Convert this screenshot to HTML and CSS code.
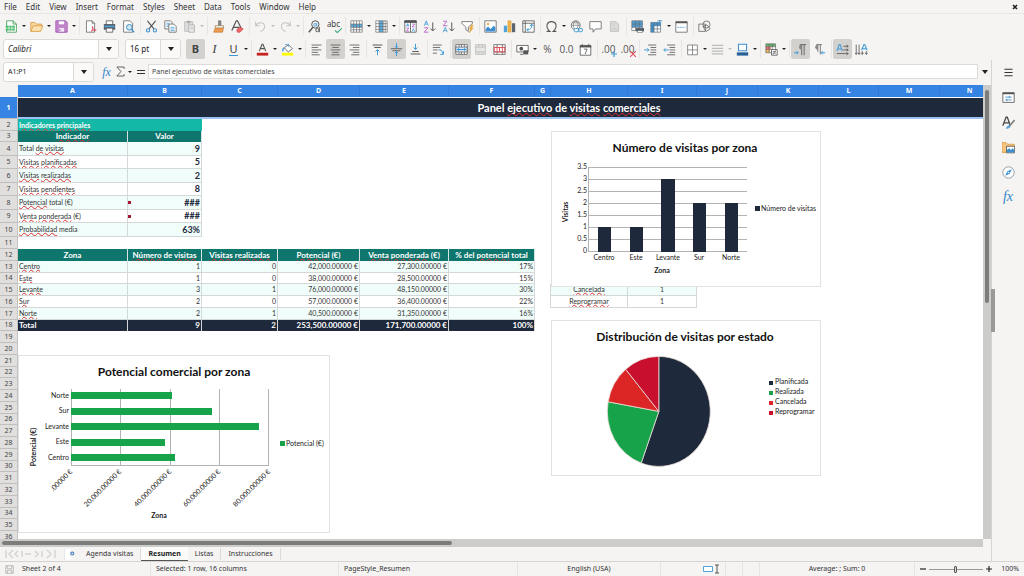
FILE: index.html
```html
<!DOCTYPE html>
<html lang="es">
<head>
<meta charset="utf-8">
<title>Panel ejecutivo de visitas comerciales</title>
<link rel="stylesheet" href="styles.css">
</head>
<body>
<div class="app">
  <nav class="menubar">
    <button>File</button><button>Edit</button><button>View</button><button>Insert</button><button>Format</button><button>Styles</button><button>Sheet</button><button>Data</button><button>Tools</button><button>Window</button><button>Help</button>
    <button class="close" aria-label="Close">
      <svg viewBox="0 0 6 6" width="6" height="6"><path d="M1 1l4 4M5 1l-4 4" stroke="#222" stroke-width="1.6"/></svg>
    </button>
  </nav>

  <div class="toolbar" role="toolbar" aria-label="Standard">
    <button class="tool" aria-label="New"><svg viewBox="0 0 16 16"><path d="M2 1h8l4 4v10H2z" fill="#fff" stroke="#3a9a50"/><path d="M10 1v4h4" fill="none" stroke="#3a9a50"/><path d="M1 7h11v6H1z" fill="#43b864"/><path d="M1 10h11M5 7v6M8.500 7v6" stroke="#fff" stroke-width=".8"/></svg></button><button class="drop" aria-label="New options"></button>
    <button class="tool" aria-label="Open"><svg viewBox="0 0 16 16"><path d="M1 14V3h5l2 2h6v3" fill="#f9d9a4" stroke="#d79a3c"/><path d="M1 14l3-7h12l-3 7z" fill="#fbe0b0" stroke="#d79a3c"/></svg></button><button class="drop" aria-label="Open options"></button>
    <button class="tool" aria-label="Save"><svg viewBox="0 0 16 16"><path d="M1 1h12l2 2v12H1z" fill="#c88bd0" stroke="#9c4fae"/><path d="M4 1h8v5H4z" fill="#fff" stroke="#9c4fae" stroke-width=".8"/><path d="M4 9h8v6H4z" fill="#f2e4f5" stroke="#9c4fae" stroke-width=".8"/><path d="M6 11v3" stroke="#9c4fae"/></svg></button><button class="drop" aria-label="Save options"></button>
    <i class="sep"></i>
    <button class="tool" aria-label="Export as PDF"><svg viewBox="0 0 16 16"><path d="M3 1h7l3 3v11H3z" fill="#fff" stroke="#666"/><path d="M10 1v3h3" fill="none" stroke="#666"/><path d="M9 14c2-2 2-5 1.500-6c-1 2 2 5 4.500 4.500c-2-.500-5 0-6 1.500z" fill="none" stroke="#d8404f"/></svg></button>
    <button class="tool" aria-label="Print"><svg viewBox="0 0 16 16"><path d="M4 1h8v5H4z" fill="#fff" stroke="#555"/><path d="M1 5h14v7H1z" fill="#56626c"/><path d="M2 7h12v2H2z" fill="#4fa3d8"/><path d="M4 10h8v5H4z" fill="#fff" stroke="#555"/></svg></button>
    <button class="tool" aria-label="Print preview"><svg viewBox="0 0 16 16"><path d="M2 1h8l3 3v11H2z" fill="#fff" stroke="#666"/><circle cx="9" cy="9" r="3.500" fill="#cfe6f6" stroke="#3f8fc8" stroke-width="1.200"/><path d="M11.500 11.500L15 15" stroke="#3f8fc8" stroke-width="1.600"/></svg></button>
    <i class="sep"></i>
    <button class="tool" aria-label="Cut"><svg viewBox="0 0 16 16"><path d="M3 1l8 10M13 1L5 11" fill="none" stroke="#555" stroke-width="1.400"/><circle cx="3.800" cy="12.800" r="2" fill="none" stroke="#3f8fc8" stroke-width="1.300"/><circle cx="12.200" cy="12.800" r="2" fill="none" stroke="#3f8fc8" stroke-width="1.300"/></svg></button>
    <button class="tool" aria-label="Copy"><svg viewBox="0 0 16 16"><path d="M1 1h7l2 2v8H1z" fill="#fff" stroke="#666"/><path d="M3 4h4M3 6h3M3 8h3" stroke="#4fa3d8"/><path d="M6 5h6l3 3v7H6z" fill="#fff" stroke="#666"/><path d="M8 9h5M8 11h5M8 13h5" stroke="#4fa3d8"/></svg></button>
    <button class="tool" aria-label="Paste"><svg viewBox="0 0 16 16"><path d="M2 2h10v12H2z" fill="#dcdcda" stroke="#bbb"/><path d="M5 1h4v3H5z" fill="#aaa"/><path d="M7 6h7v9H7z" fill="#ececec" stroke="#aaa"/><path d="M9 9h4M9 11h4" stroke="#bbb"/></svg></button><button class="drop off" aria-label="Paste options"></button>
    <i class="sep"></i>
    <button class="tool" aria-label="Clone formatting"><svg viewBox="0 0 16 16"><path d="M8 1h3v6H8z" fill="#888" stroke="#555" stroke-width=".6"/><path d="M4 7h10v3H4z" fill="#fff" stroke="#8a6a3a" stroke-width=".8"/><path d="M4 10h10l-1 5H2z" fill="#ee9b50" stroke="#c8752c" stroke-width=".8"/></svg></button>
    <button class="tool" aria-label="Clear formatting"><svg viewBox="0 0 16 16"><path d="M1 13L6.500 1h1.500L13 11M3 9h7" fill="none" stroke="#555" stroke-width="1.500"/><path d="M7 12l4-3 4 2-4 4-3 0z" fill="#ef6a6a" stroke="#cc3b45" stroke-width=".8"/></svg></button>
    <i class="sep"></i>
    <button class="tool" aria-label="Undo"><svg viewBox="0 0 16 16"><path d="M2 2v5h5M2 7c3-5 11-5 11 1c0 3-2 5-5 6" fill="none" stroke="#c6c6c4" stroke-width="1.300"/></svg></button><button class="drop off" aria-label="Undo list"></button>
    <button class="tool" aria-label="Redo"><svg viewBox="0 0 16 16"><path d="M14 2v5H9M14 7c-3-5-11-5-11 1c0 3 2 5 5 6" fill="none" stroke="#c6c6c4" stroke-width="1.300"/></svg></button><button class="drop off" aria-label="Redo list"></button>
    <i class="sep"></i>
    <button class="tool" aria-label="Find and replace"><svg viewBox="0 0 16 16"><circle cx="9" cy="5.500" r="4.500" fill="none" stroke="#555" stroke-width="1.200"/><path d="M6 9l-5 6" stroke="#555" stroke-width="1.800"/><circle cx="8.600" cy="6" r="1.700" fill="none" stroke="#3f9bd8"/><path d="M10.800 3.800v4" stroke="#3f9bd8"/><circle cx="11.500" cy="12.500" r="2" fill="#f5f4f3" stroke="#444"/><path d="M14 8.500V15" stroke="#444"/></svg></button>
    <button class="tool spell" aria-label="Spelling"><span>abc</span><svg class="tick" viewBox="0 0 10 6" width="9" height="5"><path d="M1 3l2.500 2.500L9 .5" fill="none" stroke="#36a67a" stroke-width="1.300"/></svg></button>
    <i class="sep"></i>
    <button class="tool" aria-label="Row"><svg viewBox="0 0 16 16"><path d="M1 1h14v14H1z" fill="#fff"/><path d="M1 5h14v4H1z" fill="#5aaee2"/><path d="M1 1h14v14H1zM1 5h14M1 9h14M1 12h14M4.500 1v14M8 1v14M11.500 1v14" fill="none" stroke="#666" stroke-width=".8"/></svg></button><button class="drop" aria-label="Row options"></button>
    <button class="tool" aria-label="Column"><svg viewBox="0 0 16 16"><path d="M1 1h14v14H1z" fill="#fff"/><path d="M5 1h5v14H5z" fill="#5aaee2"/><path d="M1 1h14v14H1zM1 4.500h14M1 8h14M1 11.500h14M5 1v14M10 1v14M12.500 1v14" fill="none" stroke="#666" stroke-width=".8"/></svg></button><button class="drop" aria-label="Column options"></button>
    <i class="sep"></i>
    <button class="tool" aria-label="Sort"><svg viewBox="0 0 16 16"><path d="M1 1h14v14H1z" fill="#fff" stroke="#555"/><path d="M1 1h14v2H1zM8 3v12" fill="#555" stroke="#555"/><path d="M3 8l1.500-3.500L6 8M3.500 7h2" fill="none" stroke="#3f9bd8"/><path d="M3 10h3l-3 3.500h3" fill="none" stroke="#b252c0"/><path d="M10 5h3l-3 3.500h3" fill="none" stroke="#b252c0"/><path d="M10 14l1.500-3.500L13 14" fill="none" stroke="#3f9bd8"/></svg></button>
    <button class="tool" aria-label="Sort ascending"><svg viewBox="0 0 16 16"><path d="M1.500 7L4 1l2.500 6M2.500 5h3" fill="none" stroke="#3f9bd8"/><path d="M1.500 9.500h4.500L1.500 15h5" fill="none" stroke="#b252c0"/><path d="M12 3v10M9 10.500l3 3 3-3" fill="none" stroke="#555" stroke-width="1.200"/></svg></button>
    <button class="tool" aria-label="Sort descending"><svg viewBox="0 0 16 16"><path d="M1.500 1.500h4.500L1.500 7h5" fill="none" stroke="#b252c0"/><path d="M1.500 15L4 9l2.500 6M2.500 13h3" fill="none" stroke="#3f9bd8"/><path d="M12 3v10M9 10.500l3 3 3-3" fill="none" stroke="#555" stroke-width="1.200"/></svg></button>
    <button class="tool" aria-label="AutoFilter"><svg viewBox="0 0 16 16"><path d="M1 2h13v2L9 9v5l-3-2V9L1 4z" fill="#fff" stroke="#666"/><path d="M13 6l-3 5h2l-2 5 5-6h-2l2-4z" fill="#f3b54a" stroke="#d08b22" stroke-width=".5"/></svg></button>
    <i class="sep"></i>
    <button class="tool" aria-label="Insert image"><svg viewBox="0 0 16 16"><path d="M1 1h14v14H1z" fill="#fff" stroke="#666"/><circle cx="5" cy="5" r="1.500" fill="#f2b04a"/><path d="M2 14V11l3-3 3 3 4-4 2 2v5z" fill="#3f8fd0"/></svg></button>
    <button class="tool" aria-label="Insert chart"><svg viewBox="0 0 16 16"><path d="M1 7h4v8H1z" fill="#4fa3d8"/><path d="M6 1h4v14H6z" fill="#f0b44c" stroke="#c98f2a" stroke-width=".5"/><path d="M11 4h4v11h-4z" fill="#5c6670"/></svg></button>
    <button class="tool" aria-label="Insert pivot table"><svg viewBox="0 0 16 16"><path d="M1 1h14v14H1z" fill="#fff" stroke="#555"/><path d="M1 4h14M4 1v14" stroke="#555"/><path d="M6 12c5 0 6-2 6-6M10 7.500L12 5l2 2.500M8 10l-2 2 2 2" fill="none" stroke="#3f9bd8" stroke-width="1.200"/></svg></button>
    <i class="sep"></i>
    <button class="tool" aria-label="Special character"><svg viewBox="0 0 16 16"><path d="M2 14h4c-6-5-4-12 2-12s8 7 2 12h4" fill="none" stroke="#555" stroke-width="1.300"/></svg></button><button class="drop" aria-label="Special characters"></button>
    <button class="tool" aria-label="Hyperlink"><svg viewBox="0 0 16 16"><circle cx="7" cy="6.500" r="5.500" fill="#fff" stroke="#666"/><path d="M1.500 6.500h11M7 1c-4 4-4 7 0 11M7 1c4 4 4 7 0 11M2.500 3.500h9" fill="none" stroke="#666" stroke-width=".8"/><rect x="5" y="10.500" width="6" height="4" rx="2" fill="#fff" stroke="#3f9bd8" stroke-width="1.200"/><rect x="10" y="10.500" width="5.500" height="4" rx="2" fill="none" stroke="#3f9bd8" stroke-width="1.200"/></svg></button>
    <button class="tool" aria-label="Comment"><svg viewBox="0 0 16 16"><path d="M1 2h14v9H8l-3 4v-4H1z" fill="#fff" stroke="#666"/></svg></button>
    <button class="tool" aria-label="Headers and footers"><svg viewBox="0 0 16 16"><path d="M3 2h7l3 3v9H3z" fill="#dcdcda" stroke="#bbb"/><path d="M5 5h4M5 11h6" stroke="#c4c4c2"/></svg></button>
    <i class="sep"></i>
    <button class="tool" aria-label="Print area"><svg viewBox="0 0 16 16"><path d="M1 1h13v12H1z" fill="#fff"/><path d="M1 1h13v8H1z" fill="#4f9fd6"/><path d="M1 1h13v12H1zM1 5h13M1 9h13M5.500 1v12M10 1v12" fill="none" stroke="#666" stroke-width=".8"/><path d="M6 10h10v4H6z" fill="#4e5a64"/><path d="M8 13h6v2.500H8z" fill="#fff" stroke="#4e5a64" stroke-width=".7"/></svg></button>
    <button class="tool" aria-label="Freeze"><svg viewBox="0 0 16 16"><path d="M1 3h12v12H1z" fill="#fff"/><path d="M1 3h12v4H5v8H1z" fill="#3f93d2"/><path d="M1 3h12v12H1zM1 7h12M1 11h12M5 3v12M9 3v12" fill="none" stroke="#5b6b78" stroke-width=".8"/><path d="M9 1h6M12 0v5" stroke="#3f93d2"/></svg></button><button class="drop" aria-label="Freeze options"></button>
    <button class="tool" aria-label="Split window"><svg viewBox="0 0 16 16"><path d="M1 2h14v13H1z" fill="#fff" stroke="#666"/><path d="M1 2h14v2H1z" fill="#555"/><path d="M3 9h10" stroke="#3f9bd8" stroke-dasharray="2 1"/></svg></button>
    <i class="sep"></i>
    <button class="tool" aria-label="Shapes"><svg viewBox="0 0 16 16"><path d="M1 5h8v9H1z" fill="none" stroke="#666"/><circle cx="10.500" cy="5.500" r="4.300" fill="none" stroke="#666"/><path d="M6 8l5-2 4 5-5 3z" fill="none" stroke="#666"/></svg></button>
  </div>

  <div class="toolbar format" role="toolbar" aria-label="Formatting">
    <div class="combo font"><input aria-label="Font name" value="Calibri"><button aria-label="Font list"></button></div>
    <div class="combo size"><input aria-label="Font size" value="16 pt"><button aria-label="Size list"></button></div>
    <button class="tool on glyph"><b>B</b></button>
    <button class="tool glyph serif"><em>I</em></button>
    <button class="tool glyph"><span class="under">U</span></button><button class="drop" aria-label="Underline options"></button>
    <i class="sep"></i>
    <button class="tool" aria-label="Font color"><svg viewBox="0 0 16 16"><path d="M4 10L7.500 1.500h1L12 10M5.500 7h5" fill="none" stroke="#555" stroke-width="1.400"/><path d="M1 12h14v3.500H1z" fill="#c9211e"/></svg></button><button class="drop" aria-label="Font color options"></button>
    <button class="tool" aria-label="Highlight color"><svg viewBox="0 0 16 16"><path d="M4 6l5-4 5 5-5 4z" fill="#fff" stroke="#555"/><path d="M4 6c-2 1-2 3-2 4" fill="none" stroke="#3f9bd8" stroke-width="1.800"/><path d="M9 5V1M5 2h3" stroke="#3f9bd8"/><path d="M1 12h14v3.500H1z" fill="#ffff00"/></svg></button><button class="drop" aria-label="Highlight options"></button>
    <i class="sep"></i>
    <button class="tool" aria-label="Align left"><svg viewBox="0 0 16 16"><path d="M2 2.500h12M2 5.500h8M2 8.500h12M2 11.500h8M2 14.500h10" stroke="#555"/></svg></button>
    <button class="tool on" aria-label="Center"><svg viewBox="0 0 16 16"><path d="M2 2.500h12M4 5.500h8M2 8.500h12M4 11.500h8M3 14.500h10" stroke="#555"/></svg></button>
    <button class="tool" aria-label="Align right"><svg viewBox="0 0 16 16"><path d="M2 2.500h12M6 5.500h8M2 8.500h12M6 11.500h8M4 14.500h10" stroke="#555"/></svg></button>
    <i class="sep"></i>
    <button class="tool" aria-label="Align top"><svg viewBox="0 0 16 16"><path d="M2 2.500h12M4 5.500h8" stroke="#555" stroke-width="1.200"/><path d="M8 15V8M5.500 10.500L8 8l2.500 2.500" fill="none" stroke="#3f9bd8" stroke-width="1.200"/></svg></button>
    <button class="tool on" aria-label="Center vertically"><svg viewBox="0 0 16 16"><path d="M1 7h14M3 9.500h10" stroke="#666" stroke-width="1.200"/><path d="M8 0v6M6 4l2 2 2-2M8 16v-5.500M6 12.500l2-2 2 2" fill="none" stroke="#3f9bd8" stroke-width="1.200"/></svg></button>
    <button class="tool" aria-label="Align bottom"><svg viewBox="0 0 16 16"><path d="M2 13.500h12M4 10.500h8" stroke="#555" stroke-width="1.200"/><path d="M8 1v7M5.500 5.500L8 8l2.500-2.500" fill="none" stroke="#3f9bd8" stroke-width="1.200"/></svg></button>
    <i class="sep"></i>
    <button class="tool" aria-label="Wrap text"><svg viewBox="0 0 16 16"><path d="M1 2.500h11M1 5.500h9M1 8.500h6M1 12.500h5" stroke="#555"/><path d="M8 8.500h3l3 5M14 10v4h-4" fill="none" stroke="#3f9bd8" stroke-width="1.200"/></svg></button>
    <i class="sep"></i>
    <button class="tool on" aria-label="Merge and center"><svg viewBox="0 0 16 16"><path d="M1 2h14v12H1z" fill="#fff" stroke="#666"/><path d="M1 5h14v6H1z" fill="#d5eafa" stroke="#666"/><path d="M5 2v3M8 2v3M11.500 2v3M5 11v3M8 11v3M11.500 11v3" stroke="#666"/><path d="M2.500 8h11M4.500 6.500L3 8l1.500 1.500M11.500 6.500L13 8l-1.500 1.500" fill="none" stroke="#2f8fd4" stroke-width="1.200"/></svg></button>
    <button class="tool" aria-label="Merge cells"><svg viewBox="0 0 16 16"><path d="M2 2h12v12H2zM2 5h12M2 11h12M6 2v3M10 2v3M6 11v3M10 11v3" fill="#e6e6e4" stroke="#bbb"/></svg></button>
    <button class="tool" aria-label="Unmerge cells"><svg viewBox="0 0 16 16"><path d="M1 2h14v12H1z" fill="#fff" stroke="#666"/><path d="M1 5.500h14M1 11h14M5 2v3M11.500 2v3M5 11v3M11.500 11v3" stroke="#666"/><path d="M1.500 5.500h13v5.500h-13zM5 5.500v5.500M8 5.500v5.500M11.500 5.500v5.500" fill="none" stroke="#e05560" stroke-width="1.200"/></svg></button>
    <i class="sep"></i>
    <button class="tool" aria-label="Currency format"><svg viewBox="0 0 16 16"><path d="M1 3h14v8H1z" fill="#fff" stroke="#555"/><circle cx="6.500" cy="7" r="2.300" fill="#555"/><path d="M9 9h6v5H9z" fill="#555"/><path d="M5 14h4" stroke="#555"/></svg></button><button class="drop" aria-label="Currency options"></button>
    <button class="tool glyph thin">%</button>
    <button class="tool glyph thin">0.0</button>
    <button class="tool" aria-label="Date format"><svg viewBox="0 0 16 16"><path d="M1.500 3h13v12h-13z" fill="#fff" stroke="#555"/><path d="M1 3h14v2.500H1z" fill="#555"/><path d="M4 1v3M12 1v3" stroke="#555"/><path d="M6 7.500h4l-2.500 6" fill="none" stroke="#555"/></svg></button>
    <i class="sep"></i>
    <button class="tool glyph thin" aria-label="Add decimal">.00<svg class="mark" viewBox="0 0 6 6"><path d="M0 3h6M3 0v6" stroke="#3f9bd8" stroke-width="1.200"/></svg></button>
    <button class="tool glyph thin" aria-label="Delete decimal">.00<svg class="mark" viewBox="0 0 6 6"><path d="M0 0l6 6M6 0L0 6" stroke="#e05560" stroke-width="1.200"/></svg></button>
    <i class="sep"></i>
    <button class="tool" aria-label="Increase indent"><svg viewBox="0 0 16 16"><path d="M5 2.500h10M8 5.500h7M8 8.500h7M8 11.500h7M5 14.500h10" stroke="#555"/><path d="M0 8.500h6M4 6.500l2 2-2 2" fill="none" stroke="#3f9bd8" stroke-width="1.200"/></svg></button>
    <button class="tool" aria-label="Decrease indent"><svg viewBox="0 0 16 16"><path d="M5 2.500h10M8 5.500h7M8 8.500h7M8 11.500h7M5 14.500h10" stroke="#555"/><path d="M1 8.500h6M3 6.500l-2 2 2 2" fill="none" stroke="#3f9bd8" stroke-width="1.200"/></svg></button>
    <i class="sep"></i>
    <button class="tool" aria-label="Borders"><svg viewBox="0 0 16 16"><path d="M2 2.500h12v12H2zM2 8.500h12M8 2.500v12" fill="#fff" stroke="#777"/></svg></button><button class="drop" aria-label="Border options"></button>
    <button class="tool" aria-label="Border style"><svg viewBox="0 0 16 16"><path d="M1 3h14M1 6.500h14M1 10h14M1 13.500h14" stroke="#bbb" stroke-width="1.600"/></svg></button><button class="drop off" aria-label="Border styles"></button>
    <button class="tool" aria-label="Border color"><svg viewBox="0 0 16 16"><path d="M3 1.500h10v8H3z" fill="#fff" stroke="#3f8fd0" stroke-width="1.300"/><path d="M1 11.500h14v4H1z" fill="#2a6099"/></svg></button><button class="drop" aria-label="Border colors"></button>
    <i class="sep"></i>
    <button class="tool" aria-label="Conditional formatting"><svg viewBox="0 0 16 16"><path d="M1 1h12v11H1z" fill="#fff"/><path d="M1 1h12v3.500H1z" fill="#63b56c"/><path d="M1 4.500h6V8H1z" fill="#e8696f"/><path d="M1 8h5v4H1z" fill="#efb25a"/><path d="M1 1h12v11H1zM1 4.500h12M1 8h12M5 1v11M9 1v11" fill="none" stroke="#666" stroke-width=".8"/><path d="M8 8h7v7H8z" fill="#fff" stroke="#555"/><path d="M9.500 10.500h4M9.500 12.500h4M13 9l-3 5" stroke="#555" stroke-width=".8"/></svg></button><button class="drop" aria-label="Conditional options"></button>
    <i class="sep"></i>
    <button class="tool on" aria-label="Left to right"><svg viewBox="0 0 16 16"><path d="M9.500 15V2M12.500 15V2M7 2h8" fill="none" stroke="#666" stroke-width="1.200"/><path d="M9.500 2C5 2 5 8 9.500 8z" fill="#888"/><path d="M0 12h5M3 10l2 2-2 2" fill="none" stroke="#3f9bd8" stroke-width="1.200"/></svg></button>
    <button class="tool" aria-label="Right to left"><svg viewBox="0 0 16 16"><path d="M6 11V2M9 14V2M4 2h7" fill="none" stroke="#777" stroke-width="1.200"/><path d="M6 2C1.500 2 1.500 8 6 8z" fill="#888"/><path d="M10 12h5M12 10l-2 2 2 2" fill="none" stroke="#3f9bd8" stroke-width="1.200"/></svg></button>
    <i class="sep"></i>
    <button class="tool on" aria-label="Text direction horizontal"><svg viewBox="0 0 16 16"><path d="M1 10L4 2h1l3 8M2 7.500h5" fill="none" stroke="#3f9bd8" stroke-width="1.300"/><path d="M9 4h6M9 8.500h6M1 13h14M13 2.500L15 4l-2 1.500M13 7l2 1.500-2 1.500M13 11.500l2 1.500-2 1.500" fill="none" stroke="#555"/></svg></button>
    <button class="tool" aria-label="Text direction vertical"><svg viewBox="0 0 16 16"><path d="M1.500 2v12M5 2v12M0 12l1.500 2L3 12M3.800 12L5 14l1.500-2M9 10v4M14 10v4M8 12l1 2 1.500-2M12.500 12l1.500 2 1.500-2" fill="none" stroke="#555"/><path d="M8 9l3-7h1l3 7M9 7h5" fill="none" stroke="#3f9bd8" stroke-width="1.300"/></svg></button>
  </div>

  <div class="work">
    <main class="document">
      <div class="formulabar">
        <div class="combo name"><input aria-label="Name box" value="A1:P1"><button aria-label="Names"></button></div>
        <button class="tool fx">fx</button>
        <button class="sigma" aria-label="Sum"><svg viewBox="0 0 10 12" width="9" height="11"><path d="M9 3V1H1l4.500 5L1 11h8V9" fill="none" stroke="#555"/></svg></button><button class="drop" aria-label="Functions"></button>
        <button class="equals" aria-label="Formula"><svg viewBox="0 0 8 6" width="8" height="6"><path d="M0 1.500h8M0 4.500h8" stroke="#333" stroke-width="1.200"/></svg></button>
        <input class="formula" aria-label="Formula" value="Panel ejecutivo de visitas comerciales">
        <button class="expand" aria-label="Expand formula bar"></button>
      </div>

      <div class="sheetrow">
        <div class="sheet">
          <table class="grid">
            <colgroup><col class="w18"><col class="w110"><col class="w74"><col class="w76"><col class="w82"><col class="w89"><col class="w86"><col class="w16"><col class="w77"><col class="w69"><col class="w61"><col class="w61"><col class="w60"><col class="w61"><col class="w60"><col class="w60"><col class="w60"></colgroup>
            <thead>
              <tr class="h12"><td></td><th>A</th><th>B</th><th>C</th><th>D</th><th>E</th><th>F</th><th>G</th><th>H</th><th>I</th><th>J</th><th>K</th><th>L</th><th>M</th><th>N</th><th></th><th></th></tr>
            </thead>
            <tbody>
              <tr class="h22 selected"><th>1</th><td colspan="16" class="title">Panel <u>ejecutivo</u> de <u>visitas</u> <u>comerciales</u></td></tr>
              <tr class="h12"><th>2</th><td colspan="2" class="section"><u>Indicadores</u> <u>principales</u></td></tr>
              <tr class="h11 head"><th>3</th><td><u>Indicador</u></td><td>Valor</td></tr>
              <tr class="h14 kpi tint"><th>4</th><td>Total <u>de</u> <u>visitas</u></td><td>9</td></tr>
              <tr class="h13 kpi"><th>5</th><td><u>Visitas</u> <u>planificadas</u></td><td>5</td></tr>
              <tr class="h14 kpi tint"><th>6</th><td><u>Visitas</u> <u>realizadas</u></td><td>2</td></tr>
              <tr class="h13 kpi"><th>7</th><td><u>Visitas</u> <u>pendientes</u></td><td>8</td></tr>
              <tr class="h14 kpi tint over"><th>8</th><td><u>Potencial</u> total (€)</td><td>###</td></tr>
              <tr class="h13 kpi over"><th>9</th><td><u>Venta</u> <u>ponderada</u> (€)</td><td>###</td></tr>
              <tr class="h14 kpi tint"><th>10</th><td><u>Probabilidad</u> media</td><td>63%</td></tr>
              <tr class="h12"><th>11</th></tr>
              <tr class="h12 head"><th>12</th><td>Zona</td><td><u>Número</u> de <u>visitas</u></td><td><u>Visitas</u> <u>realizadas</u></td><td><u>Potencial</u> (€)</td><td><u>Venta</u> <u>ponderada</u> (€)</td><td>% del <u>potencial</u> total</td></tr>
              <tr class="h12 data tint"><th>13</th><td><u>Centro</u></td><td>1</td><td>0</td><td>42,000.00000 €</td><td>27,300.00000 €</td><td>17%</td></tr>
              <tr class="h11 data"><th>14</th><td><u>Este</u></td><td>1</td><td>0</td><td>38,000.00000 €</td><td>28,500.00000 €</td><td>15%</td></tr>
              <tr class="h12 data tint"><th>15</th><td><u>Levante</u></td><td>3</td><td>1</td><td>76,000.00000 €</td><td>48,150.00000 €</td><td>30%</td><td class="gap"></td><td class="mid"><u>Cancelada</u></td><td class="mid">1</td></tr>
              <tr class="h12 data"><th>16</th><td><u>Sur</u></td><td>2</td><td>0</td><td>57,000.00000 €</td><td>36,400.00000 €</td><td>22%</td><td class="gap"></td><td class="mid"><u>Reprogramar</u></td><td class="mid">1</td></tr>
              <tr class="h12 data tint"><th>17</th><td><u>Norte</u></td><td>2</td><td>1</td><td>40,500.00000 €</td><td>31,350.00000 €</td><td>16%</td></tr>
              <tr class="h11 total"><th>18</th><td>Total</td><td>9</td><td>2</td><td>253,500.00000 €</td><td>171,700.00000 €</td><td>100%</td></tr>
              <tr class="h12"><th>19</th></tr>
              <tr class="h12"><th>20</th></tr>
              <tr class="h12"><th>21</th></tr>
              <tr class="h11"><th>22</th></tr>
              <tr class="h12"><th>23</th></tr>
              <tr class="h12"><th>24</th></tr>
              <tr class="h12"><th>25</th></tr>
              <tr class="h11"><th>26</th></tr>
              <tr class="h12"><th>27</th></tr>
              <tr class="h12"><th>28</th></tr>
              <tr class="h12"><th>29</th></tr>
              <tr class="h11"><th>30</th></tr>
              <tr class="h12"><th>31</th></tr>
              <tr class="h12"><th>32</th></tr>
              <tr class="h12"><th>33</th></tr>
              <tr class="h11"><th>34</th></tr>
              <tr class="h12"><th>35</th></tr>
              <tr class="h12"><th>36</th></tr>
            </tbody>
          </table>

          <svg class="chart columns" viewBox="551 131 270 156" width="270" height="156">
            <rect class="frame" x="551.500" y="131.500" width="269" height="155"/>
            <text class="heading" x="685" y="152">Número de visitas por zona</text>
            <path class="gridline" d="M588 167.500H747M588 179.500H747M588 191.500H747M588 203.500H747M588 215.500H747M588 227.500H747M588 239.500H747M588 251.500H747M588.500 167V252"/>
            <path class="navy" d="M598 227h13v25h-13zM630 227h13v25h-13zM661 179h14v73h-14zM693 203h13v49h-13zM725 203h13v49h-13z"/>
            <g class="end"><text x="587" y="169">3.5</text><text x="587" y="181">3</text><text x="587" y="193">2.5</text><text x="587" y="205">2</text><text x="587" y="217">1.5</text><text x="587" y="229">1</text><text x="587" y="241">0.5</text><text x="587" y="253">0</text></g>
            <g class="middle"><text x="604" y="260">Centro</text><text x="636" y="260">Este</text><text x="668" y="260">Levante</text><text x="699" y="260">Sur</text><text x="731" y="260">Norte</text></g>
            <text class="axis" x="662" y="273">Zona</text>
            <text class="axis" transform="translate(568 212) rotate(-90)">Visitas</text>
            <path class="navy" d="M755 206h5v5h-5z"/><text x="761" y="211">Número de visitas</text>
          </svg>

          <svg class="chart pie" viewBox="551 320 270 156" width="270" height="156">
            <rect class="frame" x="551.500" y="320.500" width="269" height="155"/>
            <text class="heading" x="685" y="341">Distribución de visitas por estado</text>
            <g stroke="#e8e0d8" stroke-width=".8">
              <path class="navy" d="M658.800 411.400V356.400A51.500 55 0 1 1 641.200 463.100z"/>
              <path class="green" d="M658.800 411.400L641.200 463.100A51.500 55 0 0 1 608.100 401.800z"/>
              <path class="red" d="M658.800 411.400L608.100 401.800A51.500 55 0 0 1 625.700 369.300z"/>
              <path class="crimson" d="M658.800 411.400L625.700 369.300A51.500 55 0 0 1 658.800 356.400z"/>
            </g>
            <path class="navy" d="M769 381h4v4h-4z"/><text x="775" y="384">Planificada</text>
            <path class="green" d="M769 391h4v4h-4z"/><text x="775" y="394">Realizada</text>
            <path class="red" d="M769 401h4v4h-4z"/><text x="775" y="404">Cancelada</text>
            <path class="crimson" d="M769 411h4v4h-4z"/><text x="775" y="414">Reprogramar</text>
          </svg>

          <svg class="chart bars" viewBox="18 355 312 178" width="312" height="178">
            <rect class="frame" x="18.500" y="355.500" width="311" height="177"/>
            <text class="heading" x="174" y="376">Potencial comercial por zona</text>
            <path class="gridline" d="M71.500 389V466M120.500 389V466M170.500 389V466M219.500 389V466M268.500 389V466M71 465.500H269"/>
            <path class="green" d="M71 392h101v7H71zM71 408h141v7H71zM71 423h188v7H71zM71 439h94v7H71zM71 454h104v7H71z"/>
            <g class="end"><text x="69" y="398">Norte</text><text x="69" y="413">Sur</text><text x="69" y="429">Levante</text><text x="69" y="444">Este</text><text x="69" y="460">Centro</text>
            <text transform="translate(73 472) rotate(-45)">.00000 €</text><text transform="translate(122 472) rotate(-45)">20,000.00000 €</text><text transform="translate(172 472) rotate(-45)">40,000.00000 €</text><text transform="translate(221 472) rotate(-45)">60,000.00000 €</text><text transform="translate(271 472) rotate(-45)">80,000.00000 €</text></g>
            <text class="axis" x="159" y="518">Zona</text>
            <text class="axis" transform="translate(36 447) rotate(-90)">Potencial (€)</text>
            <path class="green" d="M280 441h5v5h-5z"/><text x="286" y="446">Potencial (€)</text>
          </svg>
        </div>
        <div class="vscroll"><i></i></div>
      </div>
      <div class="hscroll"><i></i></div>

      <div class="tabs">
        <div class="tabnav">
          <svg viewBox="0 0 52 10" width="52" height="10"><path d="M1 1v8M8 1L4 5l4 4M13 2l-3 3 3 3M17 2v6M20 5h6M30 2l3 3-3 3M37 2v6M42 1l4 4-4 4M50 1v8" fill="none" stroke="#d4d4d2" stroke-width="1.500"/></svg>
        </div>
        <button class="addtab" aria-label="Add sheet"><svg viewBox="0 0 12 12" width="11" height="11"><path d="M0 0h7v12H0z" fill="#fff"/><path d="M0 0v12" stroke="#ccc"/><circle cx="9" cy="5" r="2.200" fill="#3a78b8"/><path d="M9 3.500v3M7.500 5h3" stroke="#fff" stroke-width=".6"/></svg></button>
        <button class="tab">Agenda visitas</button><button class="tab active">Resumen</button><button class="tab">Listas</button><button class="tab">Instrucciones</button>
      </div>
    </main>

    <aside class="sidebar">
      <span class="handle"></span>
      <button aria-label="Sidebar settings"><svg viewBox="0 0 16 16"><path d="M3 4h10M3 8h10M3 12h10" stroke="#333" stroke-width="1.500"/></svg></button>
      <button aria-label="Properties"><svg viewBox="0 0 16 16"><path d="M1 2h14v12H1z" fill="#fff" stroke="#555"/><path d="M1 2h14v2H1z" fill="#555"/><path d="M4 7.500h8M4 11h8M9 6v3M6 9.500v3" stroke="#3f8fc8"/></svg></button>
      <button aria-label="Styles"><svg viewBox="0 0 16 16"><path d="M1 12L5 1.500h1.500L10 11M2.500 8.500h6" fill="none" stroke="#444" stroke-width="1.500"/><path d="M15.500 5l-6 7" stroke="#777" stroke-width="1.800"/><path d="M5 15c2 0 1-3 4-3.500c2 1 1 4-4 3.500z" fill="#6bb2e4" stroke="#2f7fc0" stroke-width=".7"/></svg></button>
      <button aria-label="Gallery"><svg viewBox="0 0 16 16"><path d="M0 14V2h5l2 2h8v10z" fill="#f6c57e" stroke="#d79a3c"/><path d="M5.500 6.500h10v8h-10z" fill="#fff" stroke="#555"/><path d="M6 14v-3l3-2 2 2 2-2 2 2v3z" fill="#3f8fd0"/></svg></button>
      <button aria-label="Navigator"><svg viewBox="0 0 16 16"><circle cx="8" cy="8" r="7" fill="#fff" stroke="#7d8b95"/><path d="M12 4l-2.500 5.500L4 12l2.500-5.500z" fill="#3f93d2"/><circle cx="8" cy="8" r="1" fill="#fff"/></svg></button>
      <button class="fx">fx</button>
    </aside>
  </div>

  <footer class="status">
    <span class="saved"><svg viewBox="0 0 12 12" width="9" height="9"><path d="M1 1h10v10H1zM3 1v4h6V1M3 11V7h6v4" fill="none" stroke="#aaa"/></svg>Sheet 2 of 4</span>
    <span>Selected: 1 row, 16 columns</span>
    <span>PageStyle_Resumen</span>
    <span class="center">English (USA)</span>
    <span class="mode"><svg viewBox="0 0 18 10" width="18" height="10"><path d="M1.500 2.500h9v5h-9z" fill="#fff" stroke="#4fa3d8"/><path d="M13 1h4M13 9h4M15 1v8" stroke="#444" stroke-width=".9"/></svg></span>
    <span></span>
    <span></span>
    <span class="center">Average: ; Sum: 0</span>
    <span class="zoom"><button aria-label="Zoom out"><svg viewBox="0 0 6 6" width="6" height="6"><path d="M0 3h6" stroke="#222" stroke-width="1.200"/></svg></button><input type="range" min="0" max="100" value="49" aria-label="Zoom"><button aria-label="Zoom in"><svg viewBox="0 0 6 6" width="6" height="6"><path d="M0 3h6M3 0v6" stroke="#222" stroke-width="1.200"/></svg></button><b>100%</b></span>
  </footer>
</div>
</body>
</html>
```
FILE: styles.css
```css
* { box-sizing: border-box; }
body { margin: 0; background: #f5f4f3; color: #333; font: 7px/10px "Noto Sans", "Open Sans", sans-serif; }
button, input { margin: 0; padding: 0; border: 0; background: none; color: inherit; font: inherit; min-width: 0; }
svg { display: block; flex: none; }
.app { display: flex; flex-direction: column; height: 100vh; overflow: hidden; }

/* Menu bar */
.menubar { display: flex; gap: 9px; height: 14px; padding: 0 6px 0 4px; border-bottom: 1px solid #e8e7e6; font-size: 8px; }
.menubar .close { margin-left: auto; }

/* Toolbars */
.toolbar { display: flex; align-items: center; height: 24px; padding-left: 2px; }
.format { height: 22px; padding-left: 3px; }
.tool { position: relative; display: flex; flex: none; align-items: center; justify-content: center; width: 19px; height: 20px; border-radius: 2px; }
.tool svg { width: 13px; height: 13px; }
.tool.on { background: #d3d1ce; }
.drop { flex: none; width: 6px; height: 20px; padding: 0 1px; }
.drop::before { content: ""; display: block; border: 2px solid transparent; border-top-color: #222; border-bottom: 0; }
.drop.off::before { border-top-color: #bbb; }
.sep { flex: none; width: 1px; height: 18px; margin: 0 1px 0 2px; background: #e6e5e3; }
.glyph { font-size: 11px; line-height: 14px; color: #444; }
.serif { font-family: "Liberation Serif", serif; font-size: 13px; }
.under { border-bottom: 1px solid #3f9bd8; line-height: 12px; }
.thin { font-family: "Open Sans", sans-serif; font-size: 10px; color: #555; }
.tool .mark { position: absolute; right: 1px; bottom: 2px; width: 6px; height: 6px; }
.spell { flex-direction: column; font-size: 8px; line-height: 8px; color: #444; }
.tool .tick { width: 9px; height: 5px; align-self: flex-end; }

.combo { display: flex; flex: none; height: 20px; border: 1px solid #dcdad7; border-radius: 3px; background: #fff; overflow: hidden; }
.combo input { flex: 1; padding-left: 4px; color: #222; }
.combo button { width: 20px; border-left: 1px solid #dcdad7; background: #faf9f8; display: grid; place-items: center; }
.combo button::before, .expand::before { content: ""; border: 3px solid transparent; border-top: 4px solid #222; border-bottom: 0; }
.font { width: 116px; margin-right: 6px; font-size: 8px; font-style: italic; }
.size { width: 56px; margin-right: 5px; font-size: 8px; }
.name { width: 91px; margin-right: 3px; }

/* Work area */
.work { display: flex; flex: 1; min-height: 0; }
.document { display: flex; flex: 1; flex-direction: column; min-width: 0; }
.formulabar { display: flex; align-items: center; height: 25px; padding: 0 0 2px 3px; }
.fx { font: italic 12px/14px "Liberation Serif", serif; color: #2f86c8; }
.sigma { width: 11px; }
.equals { width: 15px; display: grid; place-items: center; }
.formula { flex: 1; height: 15px; padding-left: 3px; border: 1px solid #dedcd9; background: #fff; color: #444; }
.expand { width: 13px; height: 15px; display: grid; place-items: center; }

.sheetrow { display: flex; flex: 1; min-height: 0; }
.sheet { position: relative; flex: 1; min-width: 0; overflow: hidden; background: #fff; }
.vscroll { width: 8px; padding: 5px 2px; background: #cccccb; }
.vscroll i { display: block; height: 48%; border-radius: 2px; background: #7c7c7b; }
.hscroll { height: 8px; margin-right: 8px; padding: 2px; background: #cccccb; }
.hscroll i { display: block; width: 46%; height: 4px; border-radius: 2px; background: #7c7c7b; }

/* Cells */
.grid { width: 1120px; table-layout: fixed; border-spacing: 0; font: 7px/9px Lato, sans-serif; }
.grid th, .grid td { padding: 0; overflow: hidden; white-space: nowrap; vertical-align: middle; }
.grid thead td { background: #f5f4f3; }
.grid thead th { background: #3584e4; color: #fff; border-right: 1px solid #3079d4; font: bold 7px/10px "Noto Sans", sans-serif; }
.grid tbody th { background: #e0dfde; color: #444; border-right: 1px solid #c4c3c2; border-bottom: 1px solid #c0bfbe; font: 7px/8px "Noto Sans", sans-serif; }
.grid .selected th { background: #3584e4; color: #fff; font-weight: bold; }
.grid u { text-decoration: underline wavy #e03030 1px; text-decoration-skip-ink: none; text-underline-offset: 0; }
.w16 { width: 16px; } .w18 { width: 18px; } .w60 { width: 60px; } .w61 { width: 61px; }
.w69 { width: 69px; } .w74 { width: 74px; } .w76 { width: 76px; } .w77 { width: 77px; }
.w82 { width: 82px; } .w86 { width: 86px; } .w89 { width: 89px; } .w110 { width: 110px; }
.h11 { height: 11px; } .h12 { height: 12px; } .h13 { height: 13px; } .h14 { height: 14px; } .h22 { height: 22px; }
.grid .title { background: #1e293b; color: #fff; text-align: center; border-top: 1px solid #fff; border-bottom: 2px solid #9cc3f0; font-size: 11px; line-height: 14px; font-weight: bold; }
.grid .section { background: #14b8a6; color: #fff; padding-left: 1px; font-weight: bold; }
.head td { background: #0f766e; color: #fff; border-right: 1px solid #d5e5e3; text-align: center; font-weight: bold; font-size: 8px; }
.kpi td, .data td { border-right: 1px solid #d4d8d8; border-bottom: 1px solid #d4d8d8; }
.tint td { background: #f0fdfa; }
.grid .kpi td { padding: 0 1px; }
.grid .kpi td + td { text-align: right; font-size: 9px; line-height: 10px; font-weight: bold; color: #1e293b; }
.over td + td { background-image: linear-gradient(#a01830, #a01830); background-size: 3px 3px; background-repeat: no-repeat; background-position: 0 50%; }
.grid .data td { padding: 0 1px; }
.data td + td { text-align: right; }
.grid .data .gap { background: #fff; border-bottom: 0; }
.grid .data .mid { text-align: center; }
.total td { padding: 0 1px; background: #1e293b; color: #fff; border-right: 1px solid #d4d8d8; font-weight: bold; font-size: 8px; text-align: right; }
.total th + td { text-align: left; }

/* Charts float over the cells */
.chart { position: absolute; font: 7px Lato, sans-serif; fill: #222; }
.columns { left: 551px; top: 46px; }
.pie { left: 551px; top: 235px; }
.bars { left: 18px; top: 270px; }
.frame { fill: #fff; stroke: #e2e2e2; }
.heading { font-size: 12px; font-weight: bold; text-anchor: middle; fill: #111; }
.axis { font-weight: bold; text-anchor: middle; }
.middle { text-anchor: middle; }
.end { text-anchor: end; }
.gridline { fill: none; stroke: #b3b3b3; }
.navy { fill: #1e293b; }
.green { fill: #16a34a; }
.red { fill: #dc2626; }
.crimson { fill: #c8102e; }

/* Sheet tabs */
.tabs { display: flex; height: 14px; padding-left: 5px; align-items: center; }
.tabnav { width: 59px; }
.addtab { width: 15px; }
.tab { height: 12px; padding: 0 7px; border-right: 1px solid #dddbd9; }
.tab.active { height: 14px; border-right: 0; border-bottom: 1px solid #555; background: #fbfbfa; font-weight: bold; color: #222; }

/* Sidebar */
.sidebar { position: relative; display: flex; flex-direction: column; align-items: center; gap: 5px; width: 33px; padding-top: 2px; border-left: 1px solid #d6d4d2; }
.sidebar button { display: grid; place-items: center; width: 20px; height: 20px; }
.sidebar svg { width: 13px; height: 13px; }
.sidebar .fx { font-size: 14px; }
.handle { position: absolute; left: -1px; top: 229px; width: 4px; height: 43px; background: #999; }

/* Status bar */
.status { display: grid; grid-template-columns: 151fr 188fr 179fr 143fr 65fr 17fr 17fr 155fr 109fr; height: 15px; border-top: 1px solid #d6d4d2; }
.status > span { display: flex; align-items: center; min-width: 0; padding: 0 5px; border-right: 1px solid #e6e5e3; white-space: nowrap; }
.status .saved { gap: 8px; }
.status .center { justify-content: center; }
.status .mode { justify-content: flex-end; }
.status .zoom { border: 0; gap: 3px; }
.zoom b { margin-left: auto; font-weight: normal; }
.zoom input { appearance: none; width: 54px; height: 8px; background: linear-gradient(#999, #999) center / 100% 1px no-repeat; }
.zoom input::-webkit-slider-thumb { appearance: none; width: 3px; height: 7px; border: 1px solid #555; border-radius: 1px; background: #ddd; }
```
